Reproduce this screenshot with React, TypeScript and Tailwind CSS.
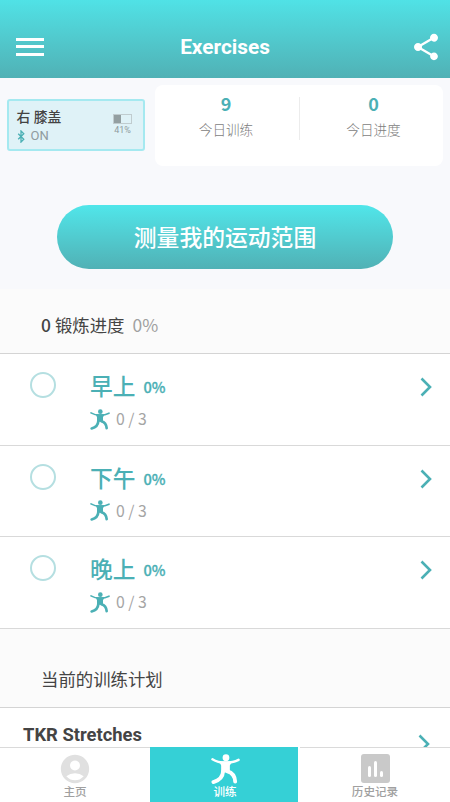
import { ReactNode } from "react";
import { MdAccountCircle, MdShare } from "react-icons/md";

const sessions = [
  { name: "早上", percent: 0, done: 0, total: 3 },
  { name: "下午", percent: 0, done: 0, total: 3 },
  { name: "晚上", percent: 0, done: 0, total: 3 },
];

function StretchIcon({ className }: { className: string }) {
  return (
    <svg viewBox="0 0 60 62" className={className} fill="none" stroke="currentColor" strokeLinecap="round">
      <circle cx="31" cy="7.5" r="7" fill="currentColor" stroke="none" />
      <path d="M3 11Q14 18 30 18Q46 18 57 12" strokeWidth="5" />
      <path d="M17 15H44L39 24V38H21V24Z" fill="currentColor" stroke="none" />
      <path d="M25 36Q24 53 5 58" strokeWidth="8" />
      <path d="M34 36Q49 40 50 57" strokeWidth="8" />
    </svg>
  );
}

function Chevron() {
  return (
    <svg viewBox="0 0 12 20" className="h-5 w-3 text-[#4bb0b5]" fill="none" stroke="currentColor" strokeWidth="2.6">
      <path d="M1.5 1.5L10 10L1.5 18.5" />
    </svg>
  );
}

function Stat({ value, label }: { value: number; label: string }) {
  return (
    <div className="flex flex-1 flex-col items-center pt-[7px]">
      <div className="font-['Noto_Sans_CJK_SC',sans-serif] text-[18px] leading-[22px] font-bold text-[#4bb0b5]">{value}</div>
      <div className="mt-[6px] text-[13.6px] leading-[20px] font-light text-[#7d7d7d]">{label}</div>
    </div>
  );
}

function Tab({ label, active, children }: { label: string; active?: boolean; children: ReactNode }) {
  return (
    <div
      className={
        active
          ? "flex w-[150px] flex-col items-center border-r-2 border-r-white bg-[#35d0d6] pt-[6px] pl-0.5 text-white"
          : "flex w-[150px] flex-col items-center border-t border-[#dadada] pt-[5px] text-[#a0a0a0]"
      }
    >
      <div className="flex h-[31px] items-center">{children}</div>
      <div className="mt-px text-[11.6px] leading-[14px] font-medium">{label}</div>
    </div>
  );
}

export default function App() {
  return (
    <div className="flex h-[802px] w-[450px] flex-col overflow-hidden bg-[#fbfbfb] font-['Roboto','Noto_Sans_CJK_SC',sans-serif] text-[#444]">
      <header className="flex h-[78px] shrink-0 items-center justify-between bg-linear-to-b from-[#50e2e6] to-[#50b1b5] pt-[15px] pr-2 pl-4 text-white">
        <div className="flex w-7 flex-col gap-[4.5px]">
          <div className="h-[3px] bg-white" />
          <div className="h-[3px] bg-white" />
          <div className="h-[3px] bg-white" />
        </div>
        <h1 className="-ml-1 text-[20.8px] leading-6 font-bold">Exercises</h1>
        <MdShare className="size-8" />
      </header>

      <section className="h-[211px] shrink-0 bg-[#f8f9fc] px-[7px] pt-[7px]">
        <div className="flex items-start justify-between">
          <div className="mt-[14px] flex h-[52px] w-[138px] justify-between rounded-[3px] border-2 border-[#a5e9f0] bg-[#dff2f7] pr-[11px] pl-[7.5px]">
            <div className="pt-[6px]">
              <div className="text-[13.8px] leading-[20px] font-medium">右 膝盖</div>
              <div className="flex items-center gap-[6px] text-[13px] leading-[18px] text-[#8f9b9e]">
                <svg viewBox="0 0 8 14" className="h-[13px] w-2 text-[#4bb0b5]" fill="none" stroke="currentColor" strokeWidth="1.4">
                  <path d="M1 4L7 10L4 13V1L7 4L1 10" />
                </svg>
                ON
              </div>
            </div>
            <div className="flex flex-col items-center pt-[13px] text-[#8f9b9e]">
              <div className="h-[10px] w-[19px] border border-[#c0cccf]">
                <div className="h-full bg-[#939fa1]" style={{ width: "41%" }} />
              </div>
              <div className="text-[9px] leading-[13px]">41%</div>
            </div>
          </div>
          <div className="flex h-[81px] w-[288px] rounded-lg bg-white">
            <div className="flex w-36 pr-0.5">
              <Stat value={9} label="今日训练" />
            </div>
            <div className="mt-3 h-[43px] w-px bg-[#ececec]" />
            <div className="flex flex-1 pl-1">
              <Stat value={0} label="今日进度" />
            </div>
          </div>
        </div>
        <button className="mx-auto mt-[39px] flex h-16 w-[336px] items-center justify-center rounded-full bg-linear-to-b from-[#50e6ea] to-[#50b1b5] pt-1 text-[22.8px] font-medium text-white">
          测量我的运动范围
        </button>
      </section>

      <div className="flex h-[65px] shrink-0 items-center border-b-[1.5px] border-[#d4d4d4] pt-2 pl-[41px] font-['Noto_Sans_CJK_SC',sans-serif] text-[17.4px]">
        <span className="font-medium">0</span>
        <span className="ml-1">锻炼进度</span>
        <span className="ml-2 text-[#a0a0a0]">0%</span>
      </div>

      {sessions.map((session, index) => (
        <div key={index} className="flex h-[91.5px] shrink-0 border-b-[1.5px] border-[#d9d9d9] bg-white pr-[18px] pl-[30px]">
          <div className="mt-[18px] size-[26px] rounded-full border-2 border-[#b5dfe1]" />
          <div className="ml-[34px] pt-[15px] font-['Noto_Sans_CJK_SC',sans-serif]">
            <div className="flex items-center gap-2 leading-[32px] text-[#4bb0b5]">
              <span className="text-[22.7px] font-medium">{session.name}</span>
              <span className="pt-0.5 text-[14.6px] font-medium [-webkit-text-stroke:0.3px]">{session.percent}%</span>
            </div>
            <div className="mt-[5px] flex items-center gap-[6px]">
              <StretchIcon className="h-[21px] w-5 text-[#4bb0b5]" />
              <span className="text-[15.8px] leading-[22px] text-[#a5a5a5]">
                {session.done} / {session.total}
              </span>
            </div>
          </div>
          <div className="mt-[23px] ml-auto">
            <Chevron />
          </div>
        </div>
      ))}

      <div className="flex h-[79.5px] shrink-0 items-center border-b-[1.5px] border-[#d4d4d4] pt-6 pl-[41px] text-[17.4px]">
        当前的训练计划
      </div>

      <div className="flex min-h-0 flex-1 justify-between overflow-hidden bg-white pr-5 pl-[23px]">
        <div className="mt-4 text-[18.4px] leading-[22px] font-bold">TKR Stretches</div>
        <div className="mt-[26px]">
          <Chevron />
        </div>
      </div>

      <nav className="flex h-[55px] shrink-0 bg-white">
        <Tab label="主页">
          <MdAccountCircle className="size-[34px] text-[#e0e0e0]" />
        </Tab>
        <Tab label="训练" active>
          <StretchIcon className="h-[30px] w-[29px]" />
        </Tab>
        <Tab label="历史记录">
          <div className="flex size-[29px] items-end justify-center gap-[3px] rounded-[3px] bg-[#c9c9c9] pb-[6px]">
            <div className="h-[11px] w-[3px] rounded-full bg-white" />
            <div className="h-4 w-[3px] rounded-full bg-white" />
            <div className="h-[6px] w-[3px] rounded-full bg-white" />
          </div>
        </Tab>
      </nav>
    </div>
  );
}
